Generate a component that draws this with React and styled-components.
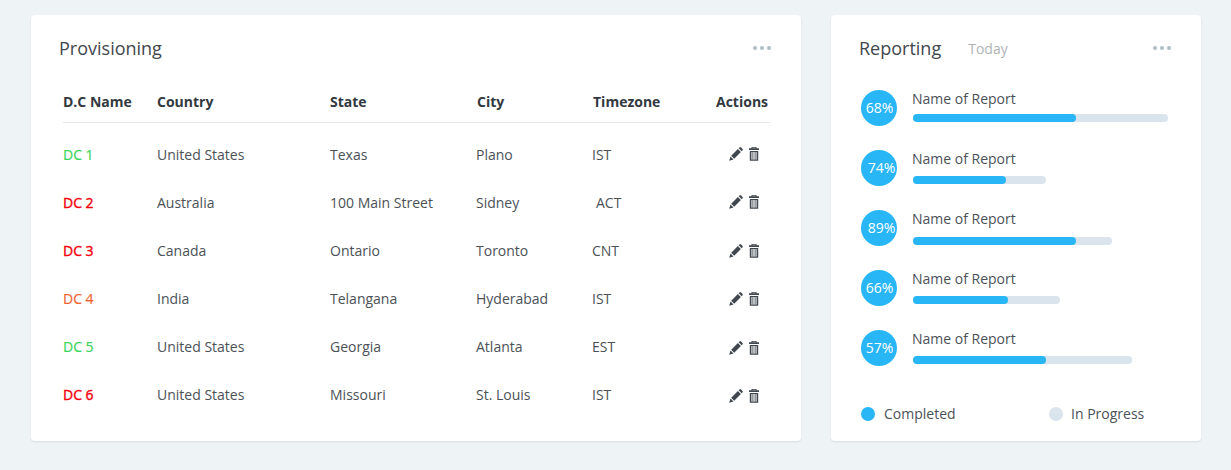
import React from "react";
import styled, { createGlobalStyle } from "styled-components";

const GlobalStyle = createGlobalStyle`
  * { box-sizing: border-box; }
  body {
    margin: 0;
    background: #eef3f6;
    color: #32393f;
    font-family: "Open Sans", "Noto Sans", sans-serif;
    font-size: 14px;
    line-height: 20px;
  }
`;

const Page = styled.main`
  display: flex;
  gap: 30px;
  width: 1231px;
  height: 470px;
  padding: 15px 30px 29px 31px;
`;

const Card = styled.section`
  width: ${(p) => p.$width}px;
  height: 426px;
  background: #fff;
  border-radius: 4px;
  box-shadow: 0 1px 2px rgba(40, 70, 90, 0.12);
`;

const CardHeader = styled.header`
  display: flex;
  align-items: center;
  height: 66px;
  padding: 0 30px 0 28px;
`;

const Title = styled.h2`
  margin: 0;
  color: #41474d;
  font-size: 18px;
  font-weight: 400;
  line-height: 24px;
`;

const Period = styled.span`
  margin: 2px 0 0 27px;
  color: #b0b3b5;
`;

const MenuButton = styled.button`
  display: flex;
  gap: 3px;
  margin-left: auto;
  padding: 0;
  border: 0;
  background: none;
`;

const MenuDot = styled.span`
  width: 4px;
  height: 4px;
  border-radius: 50%;
  background: #afbdc5;
`;

const Table = styled.div`
  margin: 0 30px 0 32px;
`;

const Row = styled.div`
  display: grid;
  grid-template-columns: 94px 173px 146px 116px 137px 1fr;
  align-items: center;
  height: 48px;
`;

const HeadRow = styled(Row)`
  grid-template-columns: 94px 173px 147px 116px 123px 1fr;
  height: 42px;
  margin-bottom: 8px;
  border-bottom: 1px solid #e6e8e9;
  font-weight: 700;
`;

const Cell = styled.span`
  padding-left: ${(p) => p.$indent || 0}px;
  white-space: nowrap;
`;

const BodyCell = styled(Cell)`
  color: #4b5156;
`;

const DcName = styled.span`
  color: ${(p) => p.$color};
  -webkit-text-stroke: ${(p) => p.$stroke}px ${(p) => p.$color};
`;

const Actions = styled.span`
  display: flex;
  align-items: center;
  gap: 6px;
  margin-top: ${(p) => p.$nudge}px;
`;

const Icon = styled.svg`
  display: block;
  width: ${(p) => p.$width}px;
  height: 14px;
  fill: #40474e;
`;

const Reports = styled.div`
  display: flex;
  flex-direction: column;
  gap: 24px;
  height: 294px;
  padding: 9px 30px 0;
`;

const Report = styled.div`
  display: flex;
  height: 36px;
`;

const Percent = styled.span`
  display: flex;
  align-items: center;
  justify-content: center;
  width: 36px;
  height: 36px;
  padding-left: ${(p) => p.$shift}px;
  border-radius: 50%;
  background: #29b6f6;
  color: #fff;
`;

const ReportBody = styled.div`
  margin-left: 15px;
`;

const ReportName = styled.div`
  height: 20px;
  margin-top: -1px;
  color: #4b5156;
`;

const Track = styled.div`
  width: ${(p) => p.$width}px;
  height: 8px;
  margin: ${(p) => p.$gap}px 0 0 1px;
  border-radius: 4px;
  background: #dae4ed;
`;

const Fill = styled.div`
  height: 8px;
  border-radius: 4px;
  background: #29b6f6;
`;

const Legend = styled.footer`
  display: grid;
  grid-template-columns: 188px 1fr;
  align-items: center;
  height: 46px;
  margin: 16px 30px 0;
`;

const LegendItem = styled.span`
  display: flex;
  align-items: center;
  gap: ${(p) => p.$gap}px;
  color: #4b5156;
`;

const LegendDot = styled.span`
  width: 14px;
  height: 14px;
  border-radius: 50%;
  background: ${(p) => p.$color};
`;

const green = "#3dd45a";
const red = "#f4040c";
const orange = "#f0652f";

const centers = [
  ["DC 1", green, 0.2, "United States", "Texas", "Plano", "IST"],
  ["DC 2", red, 0.4, "Australia", "100 Main Street", "Sidney", "ACT", 4],
  ["DC 3", red, 0.4, "Canada", "Ontario", "Toronto", "CNT"],
  ["DC 4", orange, 0.2, "India", "Telangana", "Hyderabad", "IST"],
  ["DC 5", green, 0.2, "United States", "Georgia", "Atlanta", "EST"],
  ["DC 6", red, 0.4, "United States", "Missouri", "St. Louis", "IST"],
];

const iconNudges = [-2, -2, 0, 0, 2, 2];

const reports = [
  { percent: 68, shift: 1, gap: 5, total: 255, done: 163 },
  { percent: 74, shift: 5, gap: 7, total: 133, done: 93 },
  { percent: 89, shift: 5, gap: 8, total: 199, done: 163 },
  { percent: 66, shift: 1, gap: 7, total: 147, done: 95 },
  { percent: 57, shift: 1, gap: 7, total: 219, done: 133 },
];

const Menu = () => (
  <MenuButton aria-label="More">
    <MenuDot /><MenuDot /><MenuDot />
  </MenuButton>
);

const Pencil = () => (
  <Icon $width={14} viewBox="0 0 14 14">
    <path d="M8.900 2.100 11.900 5.100 5.200 11.800 2.200 8.800Z" />
    <path d="M9.700 1.300 10.700.3Q11.400-.2 12.100.5L13.500 1.900Q14.100 2.600 13.600 3.300L12.700 4.300Z" />
    <path d="M1.500 9.500 4.500 12.500.2 13.800Z" />
  </Icon>
);

const Trash = () => (
  <Icon $width={10} viewBox="0 0 10 14">
    <path fillRule="evenodd" d="M2.500 0h5v1.300H10v1.700H0V1.300h2.500ZM3.500.8v.5h3V.8Z" />
    <path fillRule="evenodd" d="M.8 4h8.400v9.700H.8ZM2.200 5v7.500h5.600V5Z" />
    <path opacity=".35" d="M2.200 5h5.600v7.500H2.200Z" />
    <path opacity=".5" d="M3.200 5h.6v7.500h-.6ZM6.200 5h.6v7.500h-.6Z" />
  </Icon>
);

export default function App() {
  return (
    <>
      <GlobalStyle />
      <Page>
        <Card $width={770}>
          <CardHeader>
            <Title>Provisioning</Title>
            <Menu />
          </CardHeader>
          <Table>
            <HeadRow>
              {["D.C Name", "Country", "State", "City", "Timezone", "Actions"].map((label) => (
                <Cell key={label}>{label}</Cell>
              ))}
            </HeadRow>
            {centers.map(([name, color, stroke, country, state, city, zone, indent], i) => (
              <Row key={name}>
                <DcName $color={color} $stroke={stroke}>{name}</DcName>
                <BodyCell>{country}</BodyCell>
                <BodyCell>{state}</BodyCell>
                <BodyCell>{city}</BodyCell>
                <BodyCell $indent={indent}>{zone}</BodyCell>
                <Actions $nudge={iconNudges[i]}><Pencil /><Trash /></Actions>
              </Row>
            ))}
          </Table>
        </Card>
        <Card $width={370}>
          <CardHeader>
            <Title>Reporting</Title>
            <Period>Today</Period>
            <Menu />
          </CardHeader>
          <Reports>
            {reports.map((r) => (
              <Report key={r.percent}>
                <Percent $shift={r.shift}>{r.percent}%</Percent>
                <ReportBody>
                  <ReportName>Name of Report</ReportName>
                  <Track $width={r.total} $gap={r.gap}>
                    <Fill style={{ width: r.done }} />
                  </Track>
                </ReportBody>
              </Report>
            ))}
          </Reports>
          <Legend>
            <LegendItem $gap={9}><LegendDot $color="#29b6f6" />Completed</LegendItem>
            <LegendItem $gap={8}><LegendDot $color="#dae4ed" />In Progress</LegendItem>
          </Legend>
        </Card>
      </Page>
    </>
  );
}
